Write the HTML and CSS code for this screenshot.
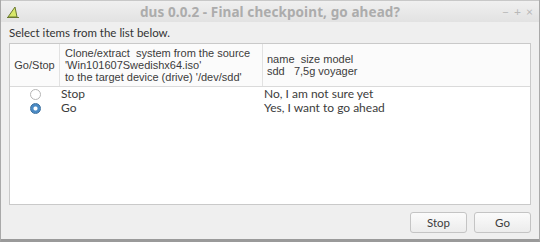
FILE: index.html
```html
<!DOCTYPE html>
<html>
<head>
    <title>dus 0.0.2 - Final checkpoint, go ahead?</title>
    <link rel="stylesheet" href="styles.css">
</head>
<body>
    <div class="window">
        <div class="titlebar">
            <svg class="app-icon" width="16" height="14" viewBox="0 0 16 14">
                <path d="M3 12 L10 2 L12 12 Z" fill="#d8e86a" stroke="#6b7a30" stroke-width="1"/>
                <path d="M2 12.5 L14 12.5" stroke="#6b7a30" stroke-width="1"/>
            </svg>
            <div class="title">dus 0.0.2 - Final checkpoint, go ahead?</div>
            <div class="controls">
                <span>&minus;</span><span>+</span><span>&times;</span>
            </div>
        </div>
        <div class="content">
            <p class="prompt">Select items from the list below.</p>
            <div class="list">
                <div class="head">
                    <div class="col c1">Go/Stop</div>
                    <div class="col c2">Clone/extract&nbsp; system from the source<br>'Win101607Swedishx64.iso'<br>to the target device (drive) '/dev/sdd'</div>
                    <div class="col c3">name&nbsp; size model<br>sdd&nbsp;&nbsp; 7,5g voyager</div>
                </div>
                <div class="row">
                    <div class="cell c1"><span class="radio"></span></div>
                    <div class="cell c2">Stop</div>
                    <div class="cell c3">No, I am not sure yet</div>
                </div>
                <div class="row">
                    <div class="cell c1"><span class="radio on"></span></div>
                    <div class="cell c2">Go</div>
                    <div class="cell c3">Yes, I want to go ahead</div>
                </div>
            </div>
            <div class="buttons">
                <button class="btn">Stop</button>
                <button class="btn">Go</button>
            </div>
        </div>
    </div>
</body>
</html>
```
FILE: styles.css
```css
body {
    margin: 0;
    font-family: Lato, "Noto Sans", sans-serif;
    font-size: 11.5px;
    color: #3c3c3c;
    background: #efefef;
}
.window {
    width: 540px;
    height: 242px;
    box-sizing: border-box;
    border-left: 1px solid #a9a9a9;
    border-right: 1px solid #a9a9a9;
    border-bottom: 3px solid #9a9a9a;
    display: flex;
    flex-direction: column;
}
.titlebar {
    height: 21px;
    background: linear-gradient(#f0f0f0, #e2e2e2);
    border-top: 1px solid #c8c8c8;
    display: flex;
    align-items: center;
    position: relative;
}
.app-icon {
    margin-left: 4px;
}
.title {
    position: absolute;
    left: 0;
    right: 0;
    text-align: center;
    font-family: "Noto Sans", sans-serif;
    font-weight: bold;
    font-size: 13.5px;
    letter-spacing: 0.1px;
    color: #acacac;
}
.controls {
    margin-left: auto;
    margin-right: 6px;
    display: flex;
    gap: 5px;
    color: #b8b8b8;
    font-size: 12px;
}
.content {
    flex: 1;
    padding: 0 8px;
    display: flex;
    flex-direction: column;
}
.prompt {
    margin: 3px 0 3px 0;
    line-height: 15px;
    color: #333;
}
.list {
    height: 160px;
    background: #fff;
    border: 1px solid #c9c9c9;
}
.head {
    display: flex;
    height: 42px;
    background: #fbfbfb;
    border-bottom: 1px solid #dadada;
    font-family: "Liberation Sans", Arial, sans-serif;
    font-size: 11px;
}
.col {
    display: flex;
    align-items: center;
    line-height: 12px;
    box-sizing: border-box;
    padding-left: 5px;
}
.head .col + .col {
    border-left: 1px solid #e2e2e2;
}
.c1 {
    width: 49px;
    flex: none;
    justify-content: center;
    padding-left: 0;
}
.c2 {
    width: 203px;
    flex: none;
}
.c3 {
    flex: 1;
}
.head .c2 {
    padding-left: 5px;
}
.head .c3 {
    padding-left: 4px;
}
.row {
    display: flex;
    height: 14px;
    line-height: 14px;
    font-size: 12px;
}
.row:first-of-type {
    margin-top: 1px;
}
.cell {
    display: flex;
    align-items: center;
    box-sizing: border-box;
}
.row .c2 {
    padding-left: 2px;
}
.row .c3 {
    padding-left: 2px;
}
.radio {
    width: 9px;
    height: 9px;
    border-radius: 50%;
    border: 1px solid #b5b5b5;
    background: #fff;
    display: inline-block;
    margin-left: 1px;
}
.radio.on {
    border-color: #3a6f9e;
    background: radial-gradient(circle, #fff 0 1.5px, #4a8ac4 2.5px);
}
.buttons {
    display: flex;
    justify-content: flex-end;
    gap: 7px;
    margin-top: 7px;
}
.btn {
    width: 57px;
    height: 21px;
    font-family: inherit;
    font-size: 11.5px;
    color: #3c3c3c;
    background: linear-gradient(#fbfbfb, #ececec);
    border: 1px solid #c4c4c4;
    border-radius: 3px;
    padding: 0;
}
```
